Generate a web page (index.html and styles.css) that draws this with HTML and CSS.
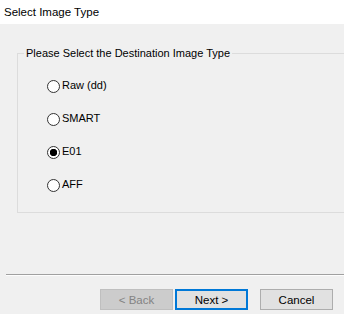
FILE: index.html
```html
<!DOCTYPE html>
<html>
<head>
<meta charset="utf-8">
<link rel="stylesheet" href="styles.css">
</head>
<body>
<div class="dialog">
  <header class="head">Select Image Type</header>
  <main class="content">
    <fieldset class="group">
      <legend class="group-title">Please Select the Destination Image Type</legend>
      <div class="options">
        <label class="option"><input type="radio" name="t" class="radio"><span>Raw (dd)</span></label>
        <label class="option"><input type="radio" name="t" class="radio"><span>SMART</span></label>
        <label class="option"><input type="radio" name="t" class="radio" checked><span>E01</span></label>
        <label class="option"><input type="radio" name="t" class="radio"><span>AFF</span></label>
      </div>
    </fieldset>
  </main>
  <div class="sep"></div>
  <footer class="buttons">
    <button class="btn btn-disabled" disabled>&lt; Back</button>
    <button class="btn btn-default">Next &gt;</button>
    <button class="btn btn-cancel">Cancel</button>
  </footer>
</div>
</body>
</html>
```
FILE: styles.css
```css
* { box-sizing: border-box; }
html, body {
  margin: 0;
  padding: 0;
  background: #f0f0f0;
  overflow: hidden;
}
body {
  width: 344px;
  height: 314px;
  font-family: "Liberation Sans", Arial, sans-serif;
  font-size: 11px;
  color: #000;
}
.dialog {
  display: flex;
  flex-direction: column;
  width: 344px;
  height: 314px;
}
.head {
  height: 24px;
  background: #fff;
  padding: 5px 0 0 4px;
  font-size: 11.5px;
  line-height: 14px;
  color: #000;
}
.content {
  padding: 22px 0 0 17px;
}
.group {
  margin: 0;
  padding: 0 0 0 6px;
  border: 1px solid #dcdcdc;
  border-right: none;
  height: 167px;
  min-width: 0;
}
.group-title {
  padding: 0 2px;
  line-height: 14px;
}
.options {
  display: flex;
  flex-direction: column;
  gap: 20px;
  padding: 19px 0 0 23px;
}
.option {
  display: flex;
  align-items: center;
  height: 13px;
  line-height: 13px;
}
.radio {
  appearance: none;
  -webkit-appearance: none;
  margin: 1px 2px 0 0;
  width: 13px;
  height: 13px;
  border: 1px solid #333;
  border-radius: 50%;
  background: #fff;
  flex: none;
}
.radio:checked {
  background: radial-gradient(circle, #000 0, #000 3.4px, #fff 4px);
}
.sep {
  margin: 61px 0 0 6px;
  height: 2px;
  border-top: 1px solid #a0a0a0;
  border-bottom: 1px solid #fdfdfd;
}
.buttons {
  display: flex;
  justify-content: flex-end;
  padding: 13px 11px 0 0;
}
.btn {
  width: 73px;
  height: 21px;
  font-family: inherit;
  font-size: 11.5px;
  padding: 0;
  background: #e1e1e1;
  border: 1px solid #adadad;
  color: #000;
}
.btn-disabled {
  background: #cccccc;
  border-color: #bfbfbf;
  color: #838383;
}
.btn-default {
  margin-left: 2px;
  border: 2px solid #0078d7;
}
.btn-cancel {
  margin-left: 12px;
}
```
